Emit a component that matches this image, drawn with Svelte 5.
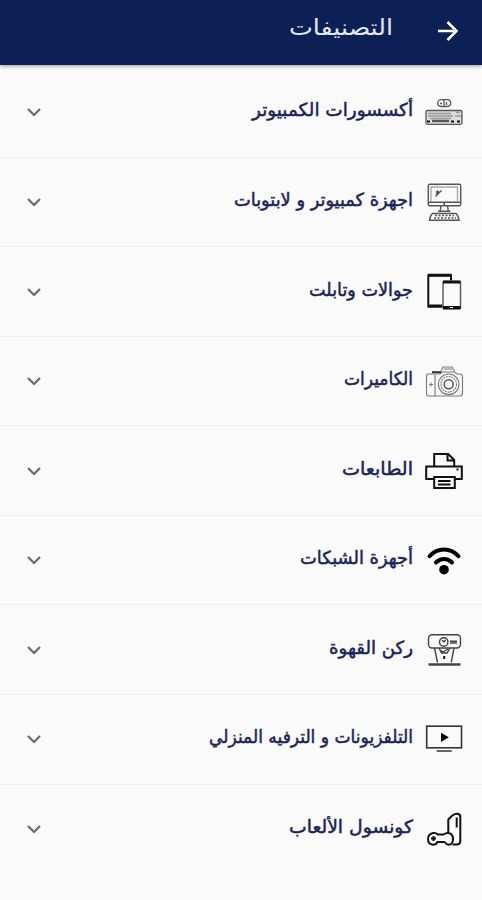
<script>
  const categories = [
    { icon: 'keyboard', name: 'أكسسورات الكمبيوتر', width: 161 },
    { icon: 'computer', name: 'اجهزة كمبيوتر و لابتوبات', width: 179 },
    { icon: 'mobile', name: 'جوالات وتابلت', width: 104 },
    { icon: 'camera', name: 'الكاميرات', width: 69 },
    { icon: 'printer', name: 'الطابعات', width: 71 },
    { icon: 'wifi', name: 'أجهزة الشبكات', width: 113 },
    { icon: 'coffee', name: 'ركن القهوة', width: 84 },
    { icon: 'tv', name: 'التلفزيونات و الترفيه المنزلي', width: 204 },
    { icon: 'console', name: 'كونسول الألعاب', width: 124 }
  ];
</script>

<main dir="rtl">
  <header class="header">
    <svg class="back" viewBox="0 0 24 24">
      <path d="M2 12h18M11.500 3l9 9-9 9" />
    </svg>
    <h1 class="title">
      <svg class="fit" width="104" height="40">
        <text x="104" y="27.500" textLength="104" lengthAdjust="spacingAndGlyphs">التصنيفات</text>
      </svg>
    </h1>
  </header>

  <ul class="list">
    {#each categories as { icon, name, width }}
      <li class="row">
        <svg class="icon" viewBox="0 0 40 40">
          {#if icon === 'keyboard'}
            <g stroke="#555" stroke-width="1.3">
              <rect x="13.700" y="7.700" width="13" height="6.800" rx="3.400" />
              <path d="M20 8v6.500M16 11.500h2M22.500 10v3" />
              <rect x="2" y="18.500" width="36" height="13.800" rx="1.500" fill="#ddd" />
              <path d="M4 21.500h23M4 24h25M6 26.500h21M32 20.500h4M31 24h6" stroke="#999" />
              <path d="M8 29h17" stroke-width="2.400" />
              <path d="M3 29.500h3M27 29.500h3M33 29.500h3" stroke="#111" stroke-width="2" />
            </g>
          {:else if icon === 'computer'}
            <g stroke="#555" stroke-width="1.4">
              <rect x="4.300" y="2.300" width="32.400" height="21.400" rx="1.500" />
              <path d="M7 19.500V5h26.500v14.500" stroke="#aaa" />
              <path d="M4 20.300h33" />
              <path d="M11.500 14.500l6-6M12 10.500l2-2M12 12.500l3-3" />
              <path d="M17 24l-.8 5M23.500 24l.8 5M14 29.200h12.500" />
              <path d="M19.500 22h1.500" stroke="#111" />
              <path d="M8.500 31.500h23.500q2.500 2 3 6.800H5.500q.5-4.800 3-6.800z" />
              <path d="M11 33.500h19M10 36h22" stroke-dasharray="2 1.500" />
            </g>
          {:else if icon === 'mobile'}
            <g stroke="#111">
              <path d="M18 34.500H4.300V3.300H27V8.500" stroke-width="2" />
              <path d="M4 3.300h23.500M4 34h14.500" stroke-width="3" stroke-linejoin="round" />
              <rect x="19" y="9.500" width="17.500" height="27.500" rx="1" stroke="#555" stroke-width="1.400" />
              <path d="M19 10h17.500M19 35.500h17.500" stroke-width="2.800" />
              <path d="M26 35.500h3" stroke="#fff" stroke-width="1" />
            </g>
          {:else if icon === 'camera'}
            <g stroke="#777" stroke-width="1.1">
              <path d="M4 13h12l2-2h12l3 2h3q2.500 0 2.500 3v16q0 3-2.500 3H4.500Q2.500 35 2.500 32V15.500Q2.500 13 4 13zM11 14v21" />
              <path d="M17 10.500l2-4.500h9l3 4.500M20 8h8" />
              <path d="M8 11.200h9" stroke="#333" stroke-width="2" />
              <circle cx="24.700" cy="23.300" r="10.300" />
              <circle cx="24.700" cy="23.300" r="7.800" stroke-dasharray="2 .8" />
              <circle cx="24.700" cy="23.300" r="4.500" stroke="#555" stroke-width="1.600" />
              <path d="M5 23.500h4M7 21.500v4" />
            </g>
          {:else if icon === 'printer'}
            <g stroke="#111" stroke-width="2">
              <path d="M10.200 15V3h14l6 6v6M23.500 3v6.500h6.500" />
              <path d="M10 28H2.200V15.500h35.600V28H31M32.500 18.500h2" />
              <rect x="10.200" y="26" width="20.600" height="11" />
              <path d="M14 30h12.500M14 33.500h12.500" />
            </g>
          {:else if icon === 'wifi'}
            <g stroke="#000" stroke-width="4" stroke-linecap="round">
              <path d="M5.500 16.200Q11.500 9.400 20 9.400t14.500 6.800M12 22.500Q15.500 19 20 19t8 3.500" />
            </g>
            <circle cx="20" cy="29.700" r="4.800" fill="#000" />
          {:else if icon === 'coffee'}
            <g stroke="#444" stroke-width="1.4">
              <rect x="4.500" y="4.800" width="32" height="13.200" rx="3.500" />
              <circle cx="19.700" cy="12" r="4.200" />
              <path d="M18 10l2 2 1.500-2M26 11.300h7M26 13h7" />
              <path d="M10.500 18l3 14.500M30 18l-2.800 14.500" />
              <path d="M15 18l2.500 5h5.500l3-5M16 20l3 2 5-3" />
              <path d="M20.200 26v3" stroke="#111" stroke-width="2" />
              <path d="M4.500 34.500h32" stroke-width="2.300" />
            </g>
          {:else if icon === 'tv'}
            <rect x="2.700" y="7.200" width="34.800" height="21.600" stroke="#333" stroke-width="1.600" />
            <path d="M17 13.700v9.200l7.800-4.600z" fill="#000" />
            <path d="M12.700 32h15" stroke="#555" stroke-width="1.800" />
          {:else}
            <g stroke="#111" stroke-width="2">
              <path d="M24.300 24V10.500q5-5.700 8.500-5.700 3.500 0 3.500 3V32q0 3.500-3.800 3.500h-4" />
              <path d="M32.700 8.500v10" />
              <path d="M9 24q3-.4 5 1.500h5.500q4-2.700 7.500-.5 2.300 2 2 6-.5 4.500-4 4.700-2.500 0-4.500-2.700h-7q-1.500 2.700-4.500 2.700-5-.5-5-5.500 0-5.200 5-6.200z" />
              <path d="M7 29.500h5M9.500 27v5" />
            </g>
          {/if}
        </svg>
        <span class="name">
          <svg class="fit" {width} height="30">
            <text x={width} y="18.500" textLength={width} lengthAdjust="spacingAndGlyphs">{name}</text>
          </svg>
        </span>
        <svg class="chevron" viewBox="0 0 16 10">
          <path d="M2 2l6 6 6-6" />
        </svg>
      </li>
    {/each}
  </ul>
</main>

<style>
  :global(body) {
    background: #fafafa;
  }

  main {
    min-height: 900px;
    font-family: "DejaVu Sans", "Noto Sans", sans-serif;
    background: #fafafa;
  }

  svg {
    display: block;
    flex: none;
    fill: none;
  }

  .header {
    display: flex;
    align-items: flex-start;
    height: 65px;
    box-sizing: border-box;
    padding: 7px 22px 0 0;
    background: #0d2056;
    box-shadow: 0 1px 4px rgba(0, 0, 0, 0.4);
  }

  .back {
    width: 24px;
    height: 24px;
    margin-top: 12px;
    stroke: #fff;
    stroke-width: 2.5;
  }

  .title {
    margin: 0 43px 0 0;
    font-size: 22px;
    font-weight: normal;
  }

  .fit {
    overflow: visible;
  }

  .title text {
    fill: #e3e7f2;
  }

  .list {
    margin: 0;
    padding: 3.2px 0 0;
    list-style: none;
  }

  .row {
    display: flex;
    align-items: center;
    height: 89.55px;
    box-sizing: border-box;
    padding: 0 18px 0 26px;
    border-bottom: 1px solid #efefef;
  }

  .row:last-child {
    border-bottom: none;
  }

  .icon {
    width: 40px;
    height: 40px;
  }

  .name {
    margin-right: 11px;
    font-size: 18px;
    font-weight: normal;
  }

  /* medium weight: regular glyphs with a thin outline */
  .name text {
    fill: #1c2356;
    stroke: #1c2356;
    stroke-width: 0.5px;
  }

  .chevron {
    width: 16px;
    height: 10px;
    margin-right: auto;
    stroke: #6a6a6a;
    stroke-width: 2.2;
  }
</style>
